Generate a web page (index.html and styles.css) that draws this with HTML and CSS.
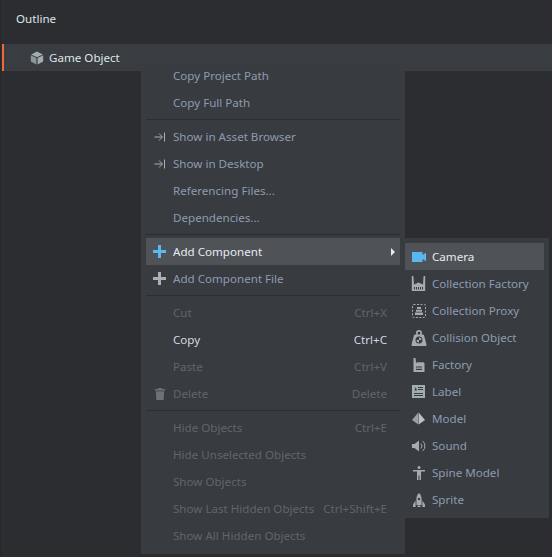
FILE: index.html
```html
<!DOCTYPE html>
<html lang="en">
<head>
<meta charset="utf-8">
<title>Outline</title>
<link rel="stylesheet" href="styles.css">
</head>
<body>
<main class="pane">
  <header class="pane-title">Outline</header>
  <div class="tree-row">
    <svg class="cube" viewBox="0 0 14 14" width="14" height="14"><path fill="#a3abb3" d="M7 .5 12.800 3.400 7 6.300 1.200 3.400z"/><path fill="#8d959d" d="M.8 4.200 6.400 7v6.500L.8 10.600z"/><path fill="#a3abb3" d="M13.200 4.200 7.600 7v6.500l5.600-2.900z"/></svg>
    <span>Game Object</span>
  </div>
</main>

<nav class="menu main-menu">
  <div class="item"><span class="ico"></span><span class="label">Copy Project Path</span></div>
  <div class="item"><span class="ico"></span><span class="label">Copy Full Path</span></div>
  <div class="sep"></div>
  <div class="item"><span class="ico"><svg viewBox="0 0 12 12" width="12" height="12"><path fill="none" stroke="#a9b0b8" stroke-width="1" d="M.5 6h7.500M5 2.500 8.500 6 5 9.500M10.500 1.500v9"/></svg></span><span class="label">Show in Asset Browser</span></div>
  <div class="item"><span class="ico"><svg viewBox="0 0 12 12" width="12" height="12"><path fill="none" stroke="#a9b0b8" stroke-width="1" d="M.5 6h7.500M5 2.500 8.500 6 5 9.500M10.500 1.500v9"/></svg></span><span class="label">Show in Desktop</span></div>
  <div class="item"><span class="ico"></span><span class="label">Referencing Files...</span></div>
  <div class="item"><span class="ico"></span><span class="label">Dependencies...</span></div>
  <div class="sep"></div>
  <div class="item active"><span class="ico"><svg viewBox="0 0 13 13" width="13" height="13"><path fill="#5ab7ef" d="M5 0h3v5h5v3H8v5H5V8H0V5h5z"/></svg></span><span class="label">Add Component</span><span class="arrow"></span></div>
  <div class="item"><span class="ico"><svg viewBox="0 0 13 13" width="13" height="13"><path fill="#a9b0b8" d="M5 0h3v5h5v3H8v5H5V8H0V5h5z"/></svg></span><span class="label">Add Component File</span></div>
  <div class="sep"></div>
  <div class="item off"><span class="ico"></span><span class="label">Cut</span><span class="key">Ctrl+X</span></div>
  <div class="item bright"><span class="ico"></span><span class="label">Copy</span><span class="key">Ctrl+C</span></div>
  <div class="item off"><span class="ico"></span><span class="label">Paste</span><span class="key">Ctrl+V</span></div>
  <div class="item off"><span class="ico"><svg viewBox="0 0 10 12" width="10" height="12"><path fill="#6c7278" d="M3.500 0h3l.5 1h3v1.400H0V1h3zM.8 3.200h8.400L8.600 12H1.400z"/></svg></span><span class="label">Delete</span><span class="key">Delete</span></div>
  <div class="sep"></div>
  <div class="item off"><span class="ico"></span><span class="label">Hide Objects</span><span class="key">Ctrl+E</span></div>
  <div class="item off"><span class="ico"></span><span class="label">Hide Unselected Objects</span></div>
  <div class="item off"><span class="ico"></span><span class="label">Show Objects</span></div>
  <div class="item off"><span class="ico"></span><span class="label">Show Last Hidden Objects</span><span class="key">Ctrl+Shift+E</span></div>
  <div class="item off"><span class="ico"></span><span class="label">Show All Hidden Objects</span></div>
</nav>

<nav class="menu sub-menu">
  <div class="item active"><span class="ico"><svg class="shift" viewBox="0 0 14 10" width="14" height="10"><path fill="#5ab7ef" d="M0 0h10.500v3L14 .8v8.400L10.500 7v3H0z"/></svg></span><span class="label">Camera</span></div>
  <div class="item"><span class="ico"><svg viewBox="0 0 15 15" width="15" height="15"><path fill="#a3abb3" d="M.8 0h1.600l.6 8.500 4.500-2 4.500 2 .6-8.500h1.600v15H.8z"/><path fill="#383b40" d="M3 11h1v2.500H3zm2 0h1v2.500H5zm2 0h1v2.500H7zm2 0h1v2.500H9zm2 0h1v2.500h-1z"/></svg></span><span class="label">Collection Factory</span></div>
  <div class="item"><span class="ico"><svg viewBox="0 0 14 14" width="14" height="14"><rect x=".5" y=".5" width="13" height="13" rx="1" fill="none" stroke="#a3abb3" stroke-dasharray="2 1.500"/><path fill="#a3abb3" d="M5 3h4v2H5zM4 5.700h6v2H4zM3 8.400h8v2.600H3z"/></svg></span><span class="label">Collection Proxy</span></div>
  <div class="item"><span class="ico"><svg viewBox="0 0 16 16" width="16" height="16"><path fill="#a3abb3" d="M8 0a3 3 0 0 1 3 3.200l-.4 1.300H12q.8 0 1 .8l2.500 9.200q0 1.500-1 1.500H1.500q-1 0-1-1.500L3 5.300q.2-.8 1-.8h1.400L5 3.200A3 3 0 0 1 8 0zm0 1.700a1.400 1.400 0 0 0-1.300 1.800l.3 1h2l.3-1A1.400 1.400 0 0 0 8 1.700z"/><circle cx="8" cy="10" r="3.500" fill="#383b40"/><path fill="#a3abb3" d="M8 7.500A2.500 2.500 0 0 1 10.500 10H8zM8 10v2.500A2.500 2.500 0 0 1 5.500 10z"/></svg></span><span class="label">Collision Object</span></div>
  <div class="item"><span class="ico"><svg viewBox="0 0 12 14" width="12" height="14"><path fill="#a3abb3" d="M.5 0h2l.6 5 1-.8h6.400l1 1V14H.5z"/><path fill="#383b40" d="M3 8.500h6v1H3zm0 2.200h6V12H3z"/></svg></span><span class="label">Factory</span></div>
  <div class="item"><span class="ico"><svg viewBox="0 0 13 13" width="13" height="13"><path fill="#a3abb3" d="M0 0h13v13H0z"/><path fill="#383b40" d="M2 8h9v1H2zm0 2h9v1H2zm4-6h5v1H6zm0-2h5v1H6zM3.700 2l1.300 3.500H2.400z"/></svg></span><span class="label">Label</span></div>
  <div class="item"><span class="ico"><svg viewBox="0 0 13 13" width="13" height="13"><path fill="#98a0a8" d="M6.300 .5 0 8l6.300 4.500z"/><path fill="#b9c0c7" d="M6.700 .5 13 8l-6.300 4.500z"/></svg></span><span class="label">Model</span></div>
  <div class="item"><span class="ico"><svg viewBox="0 0 14 12" width="14" height="12"><path fill="#a3abb3" d="M0 4h2.500L7 .5v11L2.500 8H0z"/><path fill="none" stroke="#a3abb3" d="M8.800 3.500a3.500 3.500 0 0 1 0 5M10.800 1a7 7 0 0 1 0 10"/></svg></span><span class="label">Sound</span></div>
  <div class="item"><span class="ico"><svg viewBox="0 0 12 14" width="12" height="14"><circle cx="6" cy="1.500" r="1.500" fill="#a3abb3"/><path fill="#a3abb3" d="M0 4h12v1.500H8V14H6.500V9.500h-1V14H4V5.500H0z"/></svg></span><span class="label">Spine Model</span></div>
  <div class="item"><span class="ico"><svg viewBox="0 0 14 14" width="14" height="14"><path fill="#a3abb3" d="M7 0c1.700 1.500 2.600 3.700 2.600 6.500v5.500H4.400V6.500C4.400 3.700 5.300 1.500 7 0z"/><path fill="#a3abb3" d="M3.600 7.500v6.500H1v-2.500zM10.400 7.500v6.500H13v-2.500z"/><path fill="#a3abb3" d="M5.500 12.500h3V14h-3z"/><circle cx="7" cy="6" r="1.200" fill="#383b40"/></svg></span><span class="label">Sprite</span></div>
</nav>
</body>
</html>
```
FILE: styles.css
```css
* { box-sizing: border-box; }
html, body { height: 100%; }
body {
  margin: 0;
  background: #2b2d31;
  font: 11.6px/27px "Noto Sans", sans-serif;
  color: #8d9bb0;
  overflow: hidden;
}
.pane { border-left: 1px solid #25272a; height: 100%; }
.pane-title { height: 44px; padding-left: 15px; line-height: 38px; color: #dfe4ea; }
.tree-row {
  position: relative;
  z-index: 2;
  height: 27px;
  margin-left: 1px;
  padding-left: 26px;
  display: flex;
  align-items: center;
  gap: 5px;
  background: #393c41;
  border-left: 2px solid #ef6a37;
  color: #dfe4ea;
}
.menu {
  position: absolute;
  z-index: 1;
  padding: 5px;
  background: #383b40;
}
.main-menu { left: 141px; top: 57px; width: 264px; height: 497px; }
.sub-menu { left: 400px; top: 238px; width: 149px; height: 280px; z-index: 3; }
.item { display: flex; align-items: center; height: 27px; padding-right: 13px; white-space: nowrap; }
.ico { width: 27px; flex: none; display: flex; justify-content: center; align-items: center; }
.shift { margin-left: 1px; }
.label { flex: 1; }
.off { color: #5f666e; }
.bright { color: #d2d9e2; }
.active { background: #4f5357; color: #e6ebf1; }
.arrow { position: relative; width: 0; height: 0; left: 8px; border-left: 4px solid #e6ebf1; border-top: 4px solid transparent; border-bottom: 4px solid transparent; }
.sep { height: 7px; padding-top: 3px; }
.sep::before { content: ""; display: block; height: 1px; background: #2c2e32; }
```
